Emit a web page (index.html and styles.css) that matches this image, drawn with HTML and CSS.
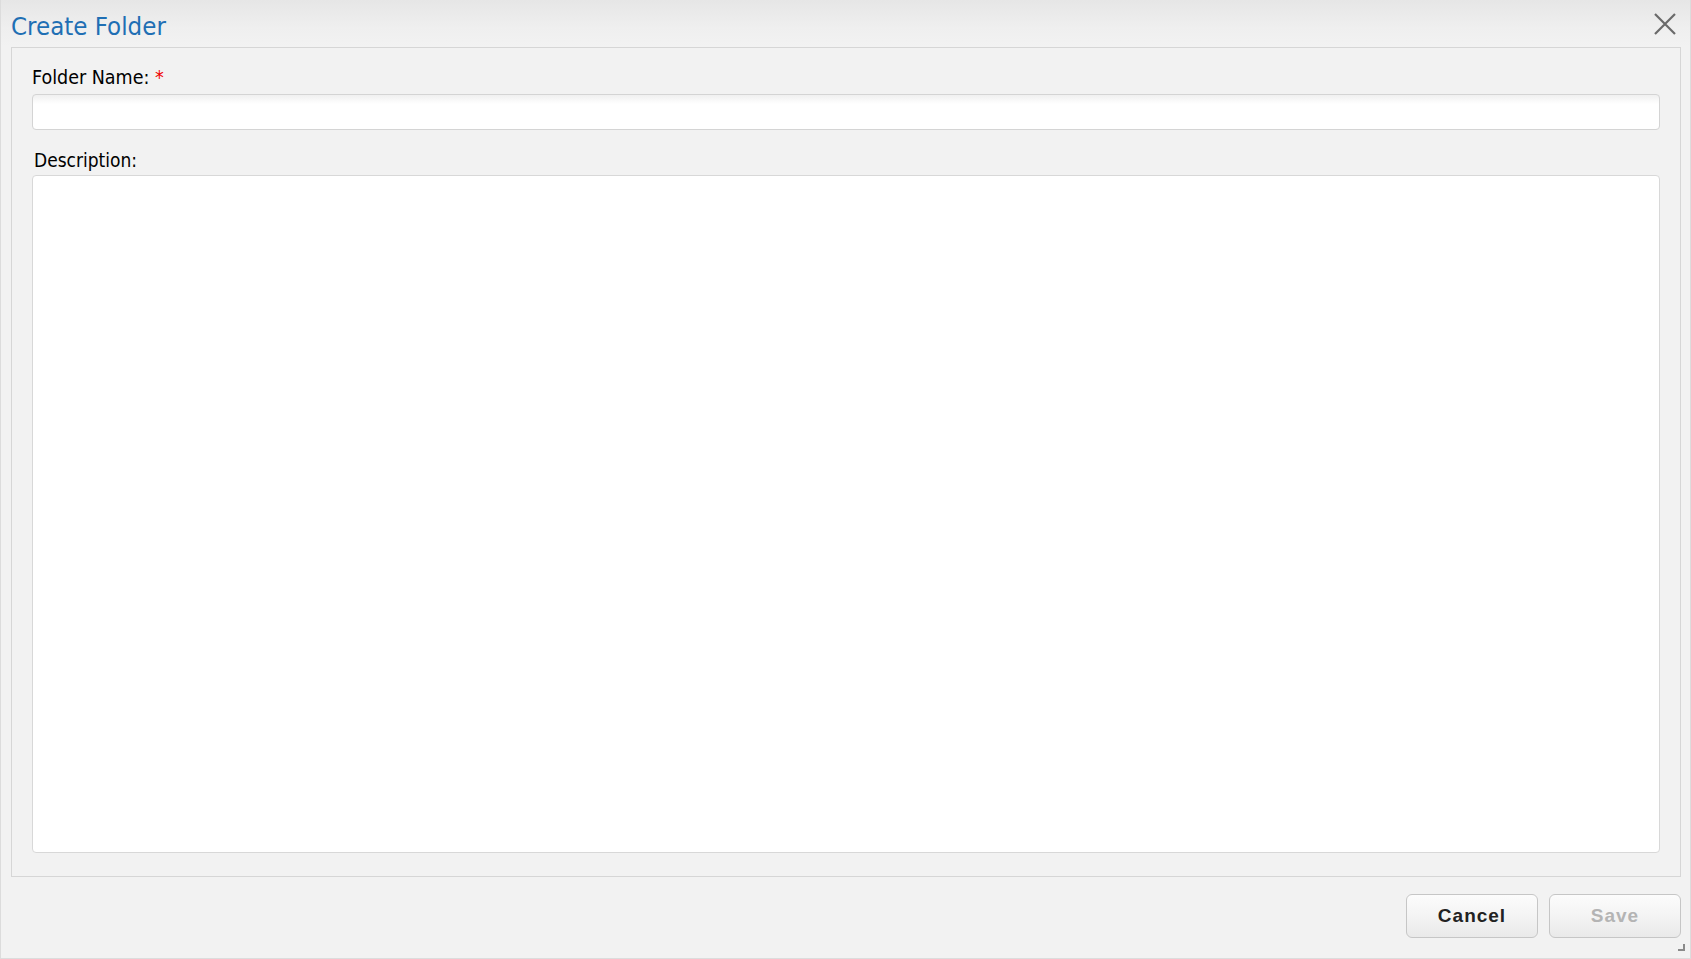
FILE: index.html
```html
<!DOCTYPE html>
<html lang="en">
<head>
<meta charset="utf-8">
<title>Create Folder</title>
<link rel="stylesheet" href="styles.css">
</head>
<body>
<div class="dialog">
  <div class="header">
    <h1 class="title">Create Folder</h1>
    <button class="close" aria-label="Close">
      <svg width="22" height="22" viewBox="0 0 22 22"><path d="M1 1 L21 21 M21 1 L1 21" stroke="#6a6a6a" stroke-width="2.2" fill="none"/></svg>
    </button>
  </div>
  <div class="panel">
    <label class="label">Folder Name: <span class="req">*</span></label>
    <input class="input" type="text">
    <label class="label label-desc">Description:</label>
    <textarea class="textarea"></textarea>
  </div>
  <div class="footer">
    <button class="btn btn-cancel">Cancel</button>
    <button class="btn btn-save" disabled>Save</button>
    <span class="grip"></span>
  </div>
</div>
</body>
</html>
```
FILE: styles.css
```css
html, body {
  margin: 0;
  padding: 0;
  background: #f2f2f2;
}
body {
  font-family: "DejaVu Sans Condensed", "DejaVu Sans", sans-serif;
  color: #000;
}
.dialog {
  position: relative;
  box-sizing: border-box;
  width: 1691px;
  height: 959px;
  border: 1px solid #dcdcdc;
  border-top: none;
  background: #f2f2f2;
  display: flex;
  flex-direction: column;
}
.header {
  height: 47px;
  display: flex;
  align-items: center;
  justify-content: space-between;
  padding: 0 14px 0 10px;
  background: linear-gradient(to bottom, #e6e6e6 0%, #efefef 60%, #f2f2f2 100%);
  box-sizing: border-box;
}
.title {
  margin: 0;
  font-weight: normal;
  font-size: 25.6px;
  color: #1f6fb4;
  line-height: 30px;
  padding-top: 4px;
}
.close {
  border: none;
  background: transparent;
  padding: 0;
  width: 22px;
  height: 22px;
  margin-top: 1px;
  cursor: pointer;
}
.close svg { display: block; }
.panel {
  box-sizing: border-box;
  height: 830px;
  margin: 0 9px 0 10px;
  border: 1px solid #d6d6d6;
  padding: 18px 20px 23px 20px;
  display: flex;
  flex-direction: column;
}
.label {
  display: block;
  font-size: 19.5px;
  line-height: 24px;
  height: 24px;
}
.req {
  color: #f00000;
}
.input {
  box-sizing: border-box;
  height: 36px;
  margin: 4px 0 0 0;
  width: 100%;
  border: 1px solid #d4d4d4;
  border-radius: 4px;
  background: linear-gradient(to bottom, #f0f0f0 0px, #ffffff 9px);
  outline: none;
  font: inherit;
}
.label-desc {
  margin-top: 18px;
  padding-left: 2px;
  font-size: 19px;
}
.textarea {
  box-sizing: border-box;
  width: 100%;
  height: 678px;
  margin: 3px 0 0 0;
  border: 1px solid #d8d8d8;
  border-radius: 4px;
  background: #ffffff;
  resize: none;
  outline: none;
  font: inherit;
}
.footer {
  flex: 1;
  display: flex;
  justify-content: flex-end;
  align-items: flex-start;
  gap: 11px;
  padding: 17px 9px 0 0;
}
.btn {
  box-sizing: border-box;
  width: 132px;
  height: 44px;
  border: 1px solid #c6c6c6;
  border-radius: 6px;
  background: linear-gradient(to bottom, #fcfcfc 0%, #f3f3f3 55%, #e9e9e9 100%);
  font-family: "Liberation Sans", Arial, sans-serif;
  font-weight: bold;
  font-size: 19px;
  letter-spacing: 1px;
  padding: 0;
}
.btn-cancel {
  color: #222222;
}
.btn-save {
  color: #b4b4b4;
}
.grip {
  position: absolute;
  right: 5px;
  bottom: 7px;
  width: 7px;
  height: 7px;
  border-right: 2px solid #8a8a8a;
  border-bottom: 2px solid #8a8a8a;
  box-sizing: border-box;
}
```
